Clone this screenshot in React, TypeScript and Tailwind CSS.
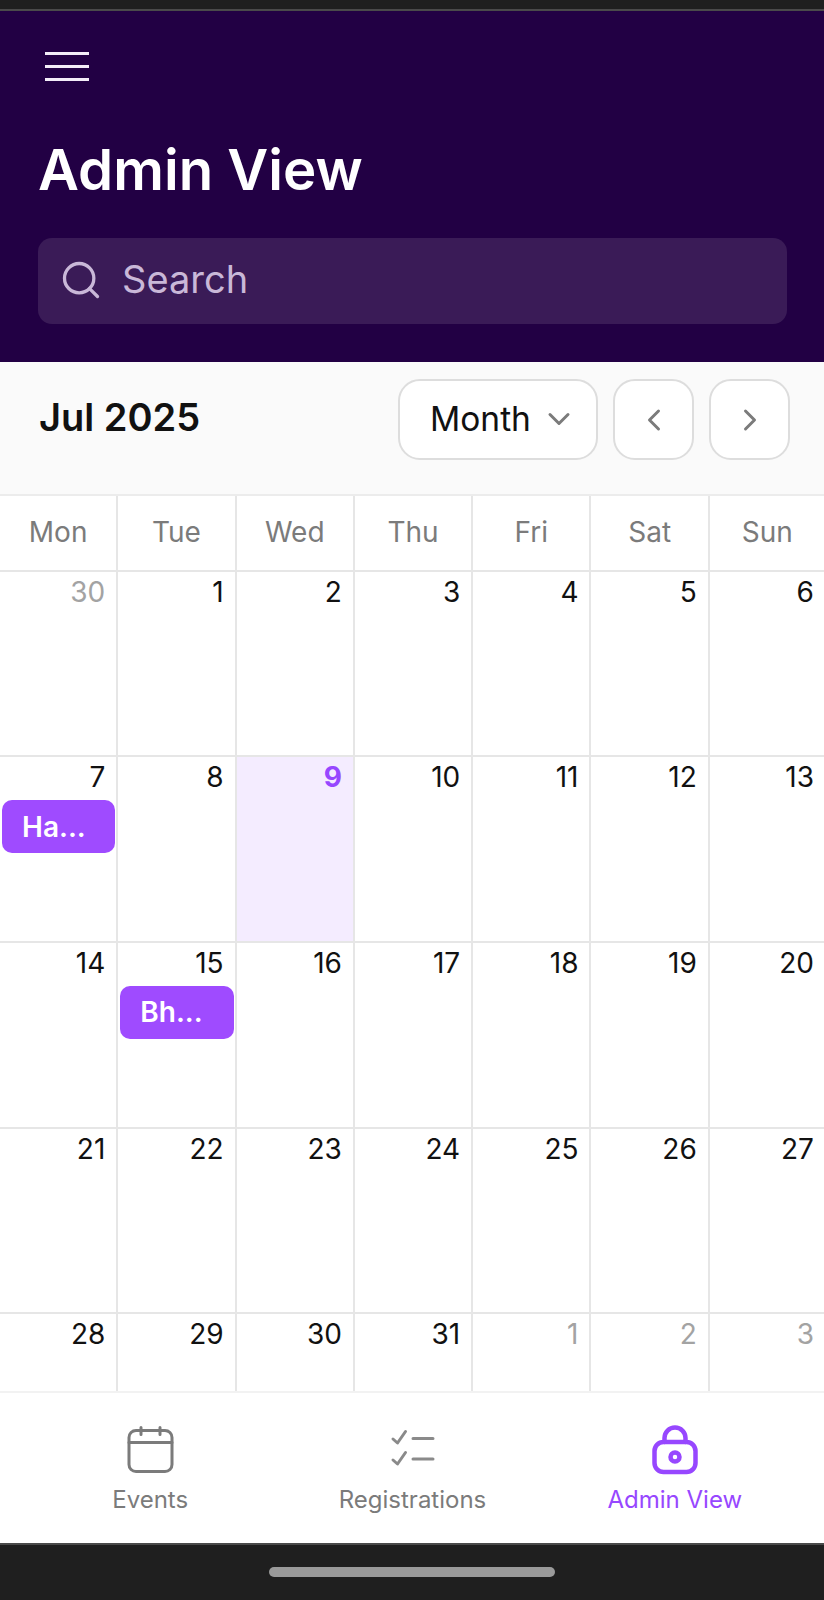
import { ChevronDown, ChevronLeft, ChevronRight, Search } from 'lucide-react';

const weekdays = ['Mon', 'Tue', 'Wed', 'Thu', 'Fri', 'Sat', 'Sun'];

type Day = { label: number; muted?: boolean; today?: boolean; event?: string };

const buildDays = (): Day[] => {
  const days: Day[] = [{ label: 30, muted: true }];
  for (let d = 1; d <= 31; d++) days.push({ label: d });
  days.push({ label: 1, muted: true }, { label: 2, muted: true }, { label: 3, muted: true });
  days[7].event = 'Ha...';
  days[9].today = true;
  days[15].event = 'Bh...';
  return days;
};

const CalendarIcon = () => (
  <svg width="48" height="48" viewBox="0 0 48 48" fill="none" stroke="#7b7b7b" strokeWidth="3" strokeLinecap="round">
    <rect x="3" y="4.5" width="43" height="41" rx="7" />
    <path d="M3 16.5h43M15 1.5v7M34 1.5v7" />
  </svg>
);

const ChecklistIcon = () => (
  <svg width="48" height="48" viewBox="0 0 48 48" fill="none" stroke="#8a8a8a" strokeWidth="3" strokeLinecap="round" strokeLinejoin="round">
    <path d="M5 13l4.500 4 8-11.500M5 34l4.500 4 8-11.500" />
    <path d="M25 12.500h20M25 33h20" />
  </svg>
);

const LockIcon = () => (
  <svg width="48" height="50" viewBox="0 0 48 50" fill="none" stroke="#9747ff" strokeWidth="4.5" strokeLinecap="round" strokeLinejoin="round">
    <rect x="3.500" y="17" width="41" height="30" rx="9" />
    <path d="M13.500 17v-4a10.500 10.500 0 0 1 21 0v4" />
    <circle cx="24" cy="32" r="4.500" />
  </svg>
);

const NavItem = ({ icon, label, active }: { icon: React.ReactNode; label: string; active?: boolean }) => (
  <div className="flex flex-1 flex-col items-center">
    <div className="flex h-[50px] items-center justify-center">{icon}</div>
    <span className={`mt-[10px] text-[24px] leading-[30px] ${active ? 'text-[#9747ff]' : 'text-[#7b7b7b]'}`}>{label}</span>
  </div>
);

export default function App() {
  const days = buildDays();

  return (
    <div className="flex h-[1600px] w-[824px] flex-col overflow-hidden bg-white font-['Inter',sans-serif]">
      {/* status bar */}
      <div className="h-[11px] shrink-0 border-b-2 border-[#4a4a4a] bg-[#1f1f1f]" />

      {/* header */}
      <div className="h-[351px] shrink-0 bg-[#220044] pl-[38px] pr-[37px] pt-[41px]">
        <div className="ml-[7px] flex h-[29px] w-[44px] flex-col justify-between">
          <div className="h-[3px] bg-[#f3ecf8]" />
          <div className="h-[3px] bg-[#f3ecf8]" />
          <div className="h-[3px] bg-[#f3ecf8]" />
        </div>
        <h1 className="mt-[53px] text-[56.300px] font-semibold leading-[72px] text-white">Admin View</h1>
        <div className="mt-[32px] flex h-[86px] items-center rounded-[14px] bg-[#3a1b57] pb-[3px] pl-[21px]">
          <Search className="h-[44px] w-[44px] text-[#c9b8d8]" strokeWidth={1.8} />
          <span className="ml-[19px] text-[38px] text-[#c9b8d8]">Search</span>
        </div>
      </div>

      {/* toolbar */}
      <div className="flex h-[134px] shrink-0 items-start justify-between border-b-2 border-[#ececec] bg-[#fafafa] pl-[39px] pr-[34px] pt-[17px]">
        <span className="mt-[14px] text-[38px] font-semibold leading-[48px] text-[#111111]">Jul 2025</span>
        <div className="flex gap-[15px]">
          <div className="flex h-[81px] w-[200px] items-center gap-[10px] rounded-[22px] border-2 border-[#dddddd] bg-white pb-[1px] pl-[30px]">
            <span className="text-[33.500px] text-[#111111]">Month</span>
            <ChevronDown className="h-[36px] w-[36px] text-[#7b7b7b]" strokeWidth={2} />
          </div>
          <div className="flex h-[81px] w-[81px] items-center justify-center rounded-[22px] border-2 border-[#dddddd] bg-white">
            <ChevronLeft className="h-[36px] w-[36px] text-[#7b7b7b]" strokeWidth={2} />
          </div>
          <div className="flex h-[81px] w-[81px] items-center justify-center rounded-[22px] border-2 border-[#dddddd] bg-white">
            <ChevronRight className="h-[36px] w-[36px] text-[#7b7b7b]" strokeWidth={2} />
          </div>
        </div>
      </div>

      {/* calendar */}
      <div className="min-h-0 flex-1 overflow-hidden">
        <div className="grid grid-cols-[118.300px_118.300px_118.300px_118.300px_118.300px_118.300px_115.200px]">
          {weekdays.map((w, i) => (
            <div
              key={w}
              className={`flex h-[75.500px] items-center justify-center border-b-2 border-[#e6e6e6] pb-[2px] text-[28px] text-[#7b7b7b] ${i < 6 ? 'border-r-2' : ''}`}
            >
              {w}
            </div>
          ))}
          {days.map((d, i) => (
            <div
              key={i}
              className={`h-[185.700px] border-b-2 border-[#e6e6e6] pl-[2px] pr-[1px] pt-[1px] ${i % 7 < 6 ? 'border-r-2' : ''} ${d.today ? 'bg-[#f4ecff]' : ''}`}
            >
              <div
                className={`pr-[10px] text-right text-[28px] leading-[38px] ${d.today ? 'font-bold text-[#9747ff]' : d.muted ? 'text-[#a3a3a3]' : 'text-[#111111]'}`}
              >
                {d.label}
              </div>
              {d.event && (
                <div className="mt-[4px] flex h-[53px] items-center rounded-[10px] bg-[#9f4bff] pl-[20px] text-[28px] font-semibold text-white">
                  {d.event}
                </div>
              )}
            </div>
          ))}
        </div>
      </div>

      {/* bottom nav */}
      <div className="flex h-[152px] shrink-0 border-t-2 border-[#f2f2f2] bg-white pl-[19px] pr-[18px] pt-[32px]">
        <NavItem icon={<CalendarIcon />} label="Events" />
        <NavItem icon={<ChecklistIcon />} label="Registrations" />
        <NavItem icon={<LockIcon />} label="Admin View" active />
      </div>

      {/* system nav bar */}
      <div className="flex h-[57px] shrink-0 items-start justify-center border-t-2 border-[#4a4a4a] bg-[#1f1f1f] pt-[22px]">
        <div className="h-[10px] w-[286px] rounded-full bg-[#9a9a9a]" />
      </div>
    </div>
  );
}
